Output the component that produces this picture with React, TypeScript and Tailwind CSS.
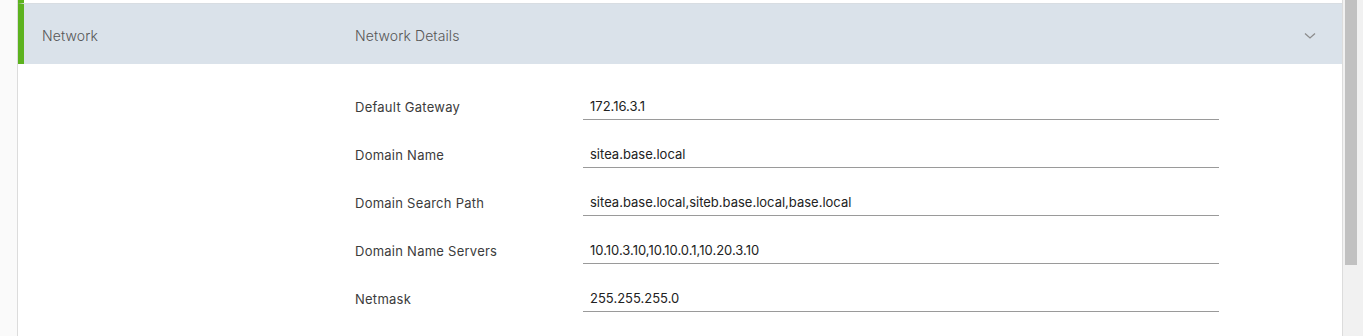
import React from "react";

const FIELDS = [
  { label: "Default Gateway", value: "172.16.3.1" },
  { label: "Domain Name", value: "sitea.base.local" },
  { label: "Domain Search Path", value: "sitea.base.local,siteb.base.local,base.local" },
  { label: "Domain Name Servers", value: "10.10.3.10,10.10.0.1,10.20.3.10" },
  { label: "Netmask", value: "255.255.255.0" },
];

function Chevron() {
  return (
    <svg width="12" height="8" viewBox="0 0 12 8" fill="none">
      <path d="M1 1.5 L6 6 L11 1.5" stroke="#8c8c8c" strokeWidth="1.3" />
    </svg>
  );
}

export default function App() {
  return (
    <div
      className="flex h-[336px] w-[1363px] overflow-hidden bg-[#fafafa] text-[13px] text-[#565656]"
      style={{ fontFamily: 'Inter, "Open Sans", sans-serif' }}
    >
      <div className="w-[17px] shrink-0" />
      <div className="flex w-[1326px] shrink-0 flex-col border-x border-[#dcdcdc] bg-white">
        <div className="h-[4px] border-l-[6px] border-[#5cb21e] border-b border-b-[#d8dde2]" />
        <div className="flex h-[60px] items-center border-l-[6px] border-[#5cb21e] bg-[#dae2ea] pt-[3px] text-[14px] font-light tracking-[0.1px]">
          <div className="w-[331px] pl-[18px]">Network</div>
          <div className="flex-1">Network Details</div>
          <div className="pr-[26px]">
            <Chevron />
          </div>
        </div>
        <div className="flex flex-col pt-[25px]">
          {FIELDS.map((f) => (
            <div key={f.label} className="flex h-[48px] pl-[337px]">
              <div className="w-[228px] pt-[9px] tracking-[0.25px] text-[#3c3c3c]">{f.label}</div>
              <div className="h-[31px] w-[636px] border-b border-[#9a9a9a] pl-[7px] pt-[8px] text-[#222]">
                {f.value}
              </div>
            </div>
          ))}
        </div>
      </div>
      <div className="flex w-[20px] shrink-0 flex-col bg-[#f1f1f1] pl-[1px]">
        <div className="ml-[1px] h-[265px] w-[12px] bg-[#c1c1c1]" />
      </div>
    </div>
  );
}
